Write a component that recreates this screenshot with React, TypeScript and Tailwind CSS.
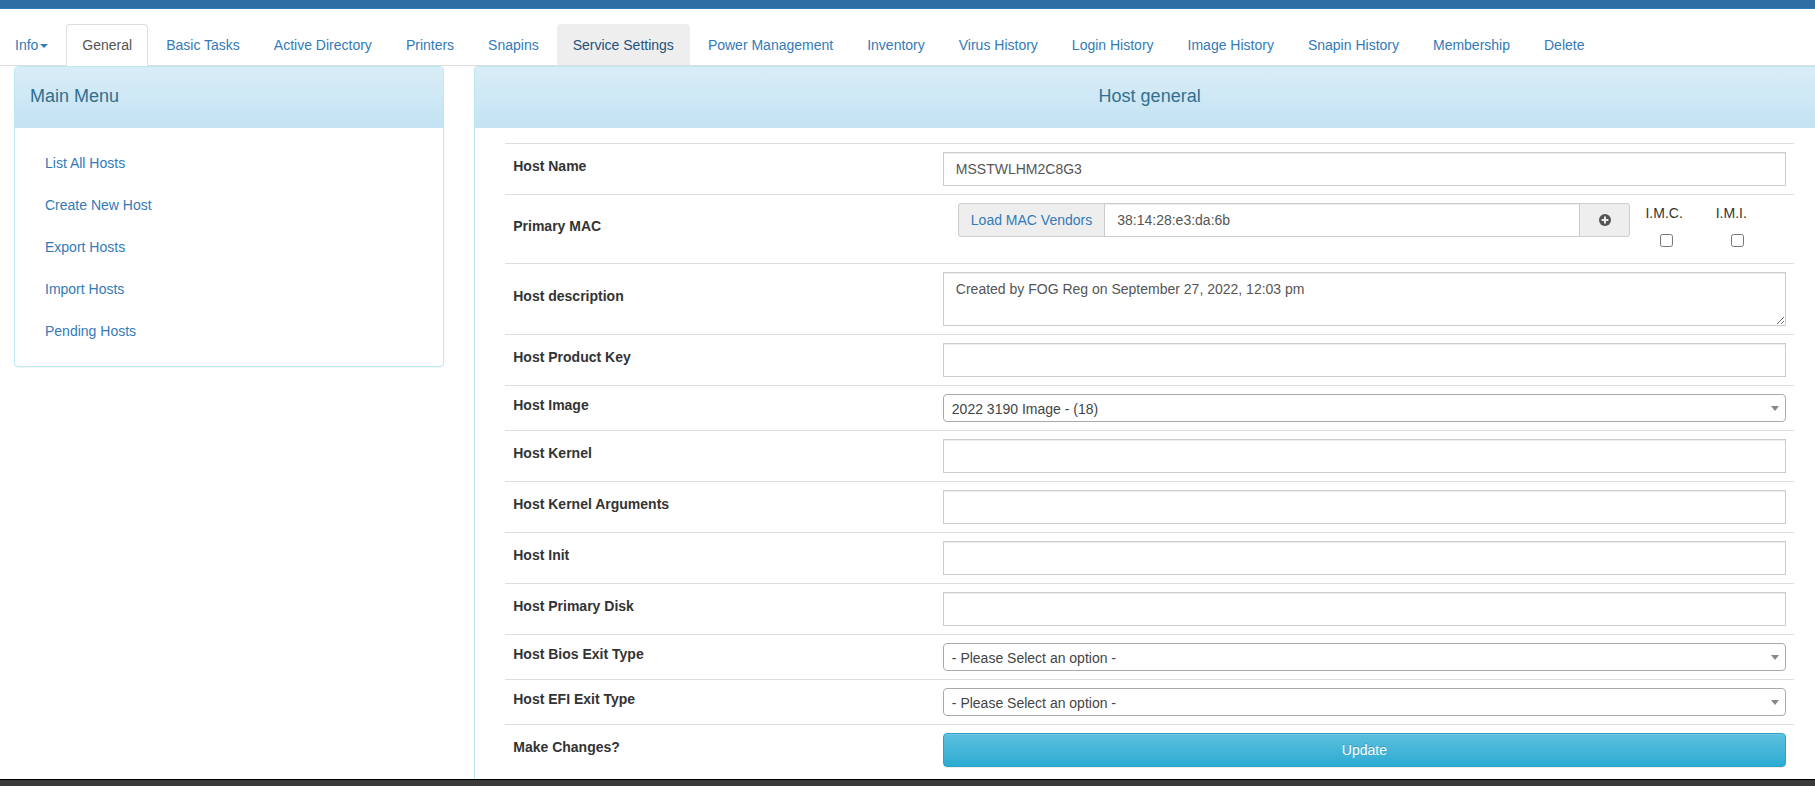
import { useId, useState, type ReactNode } from "react";
import clsx from "clsx";

const tabs = [
  "General",
  "Basic Tasks",
  "Active Directory",
  "Printers",
  "Snapins",
  "Service Settings",
  "Power Management",
  "Inventory",
  "Virus History",
  "Login History",
  "Image History",
  "Snapin History",
  "Membership",
  "Delete",
];

const menuItems = [
  "List All Hosts",
  "Create New Host",
  "Export Hosts",
  "Import Hosts",
  "Pending Hosts",
];

const ACTIVE_TAB = "General";
const FOCUSED_TAB = "Service Settings";

const inputClass =
  "block h-[34px] w-full border border-[#ccc] bg-white px-3 py-1.5 text-[#555] shadow-[inset_0_1px_1px_rgba(0,0,0,0.075)] outline-none";

export default function App() {
  return (
    <div className="flex min-h-screen flex-col overflow-hidden bg-white font-['Liberation_Sans',Arial,sans-serif] text-sm leading-5 text-[#333]">
      <header className="h-[9px] border-b border-[#337ab7] bg-[#2e6da4]" />
      <HostTabs />

      <main className="-mr-[25px] -ml-px flex grow">
        <aside className="w-1/4 px-[15px]">
          <section className="rounded border border-[#bce8f1] shadow-[0_1px_1px_rgba(0,0,0,0.05)]">
            <PanelHeading>Main Menu</PanelHeading>
            <ul className="flex flex-col gap-0.5 p-[15px]">
              {menuItems.map((item) => (
                <li key={item}>
                  <a href="#" className="block px-[15px] py-2.5 text-[#337ab7]">
                    {item}
                  </a>
                </li>
              ))}
            </ul>
          </section>
        </aside>

        <div className="flex w-3/4 px-[15px]">
          <section className="w-full rounded-t border border-b-0 border-[#bce8f1]">
            <PanelHeading centered>Host general</PanelHeading>
            <form
              className="px-[30px] pt-[15px]"
              onSubmit={(event) => event.preventDefault()}
            >
              <HostTable />
            </form>
          </section>
        </div>
      </main>

      <footer className="h-[7px] border-t border-black bg-[#3a3a3a]" />
    </div>
  );
}

function HostTabs() {
  return (
    <nav className="border-b border-[#ddd] pt-[15px]">
      <ul className="-mb-px -ml-px flex gap-0.5">
        <li>
          <a
            href="#"
            className="flex items-center gap-0.5 border border-transparent px-[15px] py-2.5 text-[#337ab7]"
          >
            Info
            <span className="mt-0.5 border-x-4 border-t-4 border-x-transparent border-t-[#337ab7]" />
          </a>
        </li>
        {tabs.map((tab) => (
          <li key={tab}>
            <a
              href="#"
              className={clsx(
                "block rounded-t border px-[15px] py-2.5 whitespace-nowrap",
                tab === ACTIVE_TAB &&
                  "border-[#ddd] border-b-white bg-white text-[#555]",
                tab === FOCUSED_TAB &&
                  "border-[#eee] border-b-[#ddd] bg-[#eee] text-[#23527c]",
                tab !== ACTIVE_TAB &&
                  tab !== FOCUSED_TAB &&
                  "border-transparent text-[#337ab7]",
              )}
            >
              {tab}
            </a>
          </li>
        ))}
      </ul>
    </nav>
  );
}

function PanelHeading({
  children,
  centered,
}: {
  children: ReactNode;
  centered?: boolean;
}) {
  return (
    <div className="rounded-t-[3px] border-b border-[#c4e3f3] bg-linear-to-b from-[#d9edf7] to-[#c4e3f3] px-[15px] pt-[19px] pb-[21px]">
      <h4
        className={clsx(
          "text-lg leading-5 text-[#31708f]",
          centered && "text-center",
        )}
      >
        {children}
      </h4>
    </div>
  );
}

function HostTable() {
  return (
    <table className="w-full table-fixed border-separate border-spacing-0">
      <tbody>
        <TextRow label="Host Name" value="MSSTWLHM2C8G3" />
        <Row label="Primary MAC" htmlFor="mac">
          <MacField />
        </Row>
        <Row label="Host description" htmlFor="description">
          <textarea
            id="description"
            rows={2}
            className="block h-[54px] w-full border border-[#ccc] bg-white px-3 py-1.5 text-[#555] shadow-[inset_0_1px_1px_rgba(0,0,0,0.075)] outline-none"
            defaultValue="Created by FOG Reg on September 27, 2022, 12:03 pm"
          />
        </Row>
        <TextRow label="Host Product Key" />
        <SelectRow label="Host Image" option="2022 3190 Image - (18)" />
        <TextRow label="Host Kernel" />
        <TextRow label="Host Kernel Arguments" />
        <TextRow label="Host Init" />
        <TextRow label="Host Primary Disk" />
        <SelectRow
          label="Host Bios Exit Type"
          option="- Please Select an option -"
        />
        <SelectRow
          label="Host EFI Exit Type"
          option="- Please Select an option -"
        />
        <Row label="Make Changes?" htmlFor="update">
          <button
            id="update"
            type="submit"
            className="block h-[34px] w-full rounded border border-[#28a4c9] bg-linear-to-b from-[#5bc0de] to-[#2aabd2] text-white shadow-[inset_0_1px_0_rgba(255,255,255,0.15),0_1px_1px_rgba(0,0,0,0.075)] [text-shadow:0_-1px_0_rgba(0,0,0,0.2)]"
          >
            Update
          </button>
        </Row>
      </tbody>
    </table>
  );
}

function Row({
  label,
  htmlFor,
  children,
}: {
  label: string;
  htmlFor: string;
  children: ReactNode;
}) {
  return (
    <tr>
      <td className="w-1/3 border-t border-[#ddd] p-2 align-middle">
        <label htmlFor={htmlFor} className="mb-[7px] block font-bold">
          {label}
        </label>
      </td>
      <td className="w-2/3 border-t border-[#ddd] p-2 align-middle">
        {children}
      </td>
    </tr>
  );
}

function TextRow({ label, value = "" }: { label: string; value?: string }) {
  const id = useId();

  return (
    <Row label={label} htmlFor={id}>
      <input id={id} type="text" defaultValue={value} className={inputClass} />
    </Row>
  );
}

function SelectRow({ label, option }: { label: string; option: string }) {
  const id = useId();

  return (
    <Row label={label} htmlFor={id}>
      <div className="relative">
        <select
          id={id}
          className="block h-7 w-full appearance-none rounded border border-[#aaa] bg-white pt-0.5 pr-5 pl-2 text-[#444] outline-none"
        >
          <option>{option}</option>
        </select>
        <span className="pointer-events-none absolute top-3 right-[7px] border-x-4 border-t-5 border-x-transparent border-t-[#888]" />
      </div>
    </Row>
  );
}

function MacField() {
  const [mac, setMac] = useState("38:14:28:e3:da:6b");

  return (
    <div className="grid h-[52px] grid-cols-12">
      <div className="col-span-10 flex h-[34px] px-[15px]">
        <a
          href="#"
          className="rounded-l border border-r-0 border-[#ccc] bg-[#eee] px-3 py-1.5 whitespace-nowrap text-[#337ab7]"
        >
          Load MAC Vendors
        </a>
        <input
          id="mac"
          type="text"
          value={mac}
          onChange={(event) => setMac(event.target.value)}
          className={clsx(inputClass, "min-w-0 grow")}
        />
        <button
          type="button"
          aria-label="Add MAC"
          className="flex w-[50px] shrink-0 items-center justify-center rounded-r border border-l-0 border-[#ccc] bg-[#eee]"
        >
          <svg viewBox="0 0 12 12" className="size-3">
            <circle cx="6" cy="6" r="6" fill="#555" />
            <path d="M5 2.6h2V5h2.4v2H7v2.4H5V7H2.6V5H5z" fill="#eee" />
          </svg>
        </button>
      </div>
      <MacFlag label="I.M.C." />
      <MacFlag label="I.M.I." />
    </div>
  );
}

function MacFlag({ label }: { label: string }) {
  const id = useId();

  return (
    <div className="flex flex-col items-start gap-[11px]">
      <label htmlFor={id}>{label}</label>
      <input id={id} type="checkbox" className="ml-[15px] size-[13px]" />
    </div>
  );
}
